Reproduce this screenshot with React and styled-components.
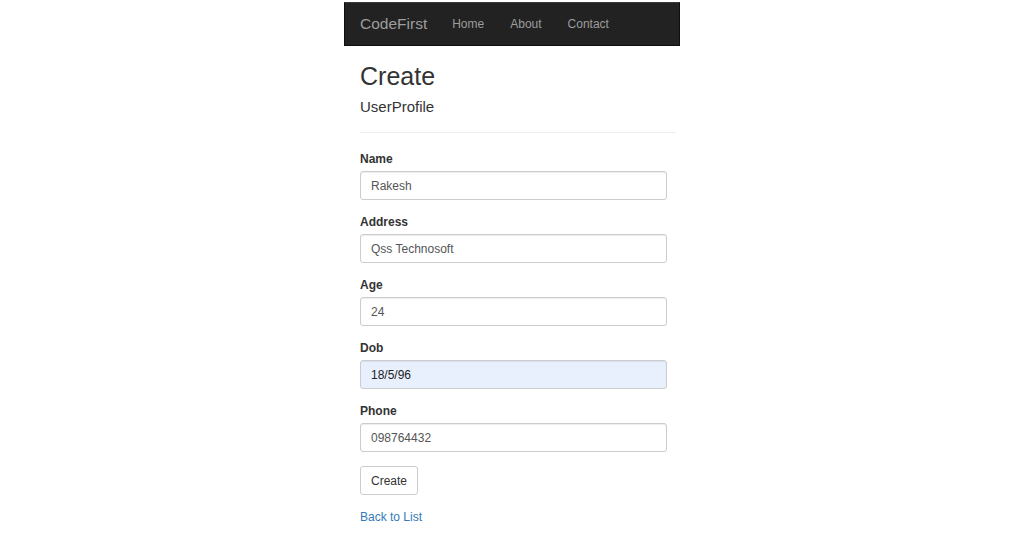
import React from "react";
import styled, { createGlobalStyle } from "styled-components";

const Global = createGlobalStyle`
  html, body { margin: 0; padding: 0; background: #fff; }
  body { font-family: "Liberation Sans", Arial, sans-serif; color: #333; }
  * { box-sizing: border-box; }
`;

const Page = styled.div`
  width: 336px;
  margin: 2px auto 0;
`;

const Navbar = styled.nav`
  height: 44px;
  background: #222;
  border: 1px solid #0e0e0e;
  border-top-color: #3a3a3a;
  display: flex;
  align-items: center;
  padding-left: 15px;
`;

const Brand = styled.a`
  font-size: 15.5px;
  color: #9d9d9d;
  text-decoration: none;
  margin-right: 25px;
`;

const NavLink = styled.a`
  font-size: 12px;
  color: #9d9d9d;
  text-decoration: none;
  margin-right: 26px;
`;

const Content = styled.main`
  padding: 0 16px;
`;

const Title = styled.h2`
  margin: 17px 0 0;
  font-size: 25px;
  font-weight: 400;
  line-height: 27.5px;
  color: #333;
`;

const SubTitle = styled.h4`
  margin: 8px 0 0;
  font-size: 15px;
  font-weight: 400;
  line-height: 16.5px;
  color: #333;
`;

const Rule = styled.hr`
  margin: 17px -12px 0 0;
  border: 0;
  border-top: 1px solid #eee;
`;

const Form = styled.form`
  display: flex;
  flex-direction: column;
  padding-top: 18px;
`;

const Group = styled.div`
  display: flex;
  flex-direction: column;
  margin-bottom: 14px;
`;

const Label = styled.label`
  font-size: 12px;
  font-weight: 700;
  line-height: 17px;
  margin-bottom: 3px;
  color: #333;
`;

const Input = styled.input`
  width: 307px;
  height: 29px;
  padding: 0 10px;
  font-family: "Liberation Sans", Arial, sans-serif;
  font-size: 12px;
  color: ${(p) => (p.$filled ? "#222" : "#555")};
  background: ${(p) => (p.$filled ? "#e8f0fe" : "#fff")};
  border: 1px solid #ccc;
  border-radius: 3px;
  box-shadow: inset 0 1px 1px rgba(0, 0, 0, 0.075);
  outline: none;
`;

const Button = styled.button`
  align-self: flex-start;
  height: 29px;
  padding: 0 10px;
  font-family: "Liberation Sans", Arial, sans-serif;
  font-size: 12px;
  color: #333;
  background: #fff;
  border: 1px solid #ccc;
  border-radius: 3px;
`;

const BackLink = styled.a`
  display: block;
  margin-top: 14px;
  font-size: 12px;
  line-height: 17px;
  color: #337ab7;
  text-decoration: none;
`;

const fields = [
  { label: "Name", value: "Rakesh" },
  { label: "Address", value: "Qss Technosoft" },
  { label: "Age", value: "24" },
  { label: "Dob", value: "18/5/96", filled: true },
  { label: "Phone", value: "098764432" },
];

export default function App() {
  return (
    <>
      <Global />
      <Page>
        <Navbar>
          <Brand href="#">CodeFirst</Brand>
          <NavLink href="#">Home</NavLink>
          <NavLink href="#">About</NavLink>
          <NavLink href="#">Contact</NavLink>
        </Navbar>
        <Content>
          <Title>Create</Title>
          <SubTitle>UserProfile</SubTitle>
          <Rule />
          <Form onSubmit={(e) => e.preventDefault()}>
            {fields.map((f) => (
              <Group key={f.label}>
                <Label>{f.label}</Label>
                <Input defaultValue={f.value} $filled={f.filled} />
              </Group>
            ))}
            <Button type="submit">Create</Button>
          </Form>
          <BackLink href="#">Back to List</BackLink>
        </Content>
      </Page>
    </>
  );
}
